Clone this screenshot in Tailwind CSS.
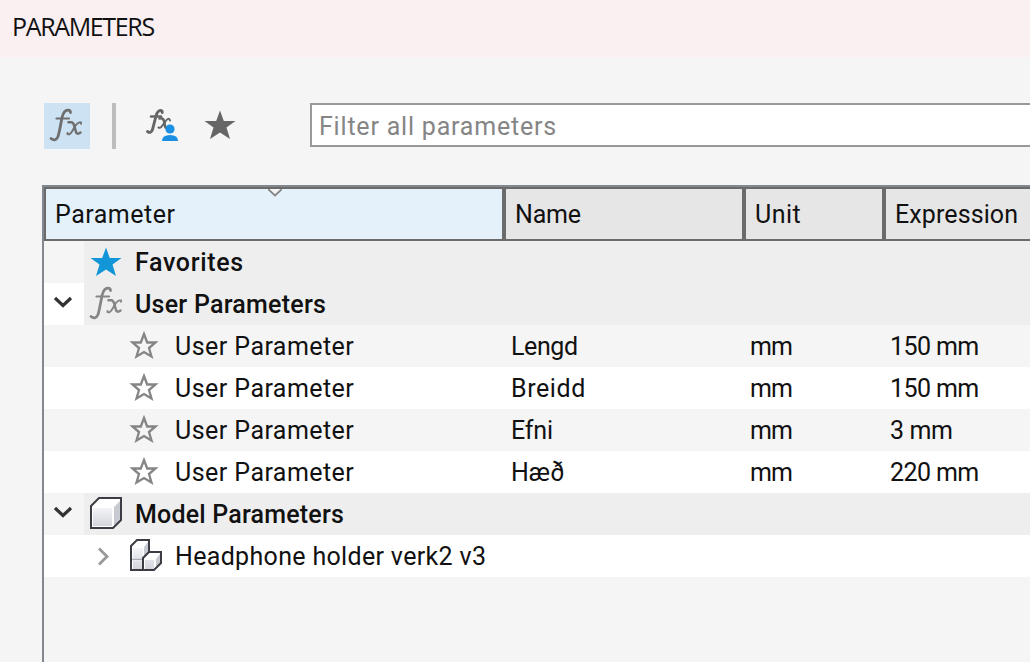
<!DOCTYPE html>
<html lang="en">
<head>
<meta charset="utf-8">
<title>Parameters</title>
<script src="https://cdn.jsdelivr.net/npm/@tailwindcss/browser@4"></script>
</head>
<body class="w-[1030px] h-[662px] overflow-hidden bg-[#f5f5f5] text-[#111] text-[25px] font-['Roboto',sans-serif] flex flex-col whitespace-nowrap">
<svg class="hidden">
  <symbol id="star" viewBox="0 0 32 32"><path d="M16 1.500 19.800 12H31.500L22.500 18.500 26 30 16 23.500 6 30 9.500 18.500.5 12H12.200Z" fill="currentColor"/></symbol>
  <symbol id="outline" viewBox="0 0 30 30"><path d="M15 3 18.200 11.500H26.500L20 17 22.500 25.500 15 21 7.500 25.500 10 17 3.500 11.500H11.800Z" fill="none" stroke="#858585" stroke-width="2.300"/></symbol>
  <symbol id="fx" viewBox="0 0 34 36"><g fill="none" stroke="currentColor" stroke-linecap="round"><path d="M2 30.500Q6.500 34 9 28.500Q10 26 13 9.500Q15 2 19 2.200Q21.500 2.400 21.500 4.500" stroke-width="2.800"/><path d="M7.500 10.500H20" stroke-width="2.200"/><path d="M19.500 14.200H22.500Q24 14.200 25 17L27 24Q28 27 31.500 24.500" stroke-width="2.500"/><path d="M32 15.800V14.500Q29 13.500 26 18.500L23 23.500Q20.500 27.500 18.500 26V25" stroke-width="1.900"/></g></symbol>
  <symbol id="down" viewBox="0 0 20 12"><path d="M2 2 10 9.500 18 2" fill="none" stroke="#333" stroke-width="3.200"/></symbol>
</svg>
<header class="h-[57px] shrink-0 bg-[#faf0f1] pl-[12px] pt-[10px] leading-[32px] text-[25px] tracking-[-1.350px] font-['Open_Sans',sans-serif]">PARAMETERS</header>
<div class="h-[128px] shrink-0 flex items-start pt-[46px] pl-[44px]">
  <div class="w-[46px] h-[46px] bg-[#cde2f2] text-[#6e6e6e] pl-[5px] pt-[5px]"><svg class="w-[34px] h-[36px]"><use href="#fx"/></svg></div>
  <div class="w-[4px] h-[46px] bg-[#bdbdbd] ml-[22px]"></div>
  <div class="w-[34px] h-[34px] ml-[29px] mt-[5px] text-[#666]"><svg width="34" height="34" viewBox="0 0 34 34"><g fill="none" stroke="currentColor" stroke-linecap="round"><path d="M2.500 23.500Q6 26 7.500 21.500L11 8Q12.500 2.500 15.500 2.500Q17.500 2.600 17.200 4.500" stroke-width="2.900"/><path d="M6 8.500H16" stroke-width="2.400"/><path d="M14.500 10.500Q18 9.500 19 13L20 18Q20.500 20.500 22 19.500" stroke-width="2.600"/><path d="M25 12.500Q23.500 8.500 20 14L17 18Q15.500 20.500 13.500 19.500" stroke-width="2"/></g><circle cx="25" cy="21" r="4.600" fill="#1a8fe3"/><path d="M17 33Q17 27 25 27Q33 27 33 33Z" fill="#1a8fe3"/></svg></div>
  <svg class="w-[32px] h-[32px] ml-[25px] mt-[6px] text-[#666]"><use href="#star"/></svg>
  <div class="flex-1 h-[44px] ml-[74px] border-2 border-r-0 border-[#999] bg-white text-[#858585] pl-[7px] leading-[44px]"><span class="tracking-[0.8px]">Filter all parameters</span></div>
</div>
<main class="flex-1 ml-[42px] border-l-2 border-t-2 border-[#828790] flex flex-col">
  <div class="h-[54px] shrink-0 border-y-2 border-l-2 border-[#6b6b6b] flex bg-[#e6e6e6] leading-[52px]">
    <div class="relative w-[460px] h-[50px] bg-[#e4f1fb] border-r-4 border-[#6b6b6b] pl-[9px] tracking-[0.5px]">Parameter<svg class="absolute left-[222px] top-0" width="14" height="8"><path d="M0 0 7 6.500 14 0" fill="#f5f5f5" stroke="#858585" stroke-width="1.800"/></svg></div>
    <div class="w-[240px] h-[50px] border-r-4 border-[#6b6b6b] pl-[9px] tracking-[-0.2px]">Name</div>
    <div class="w-[140px] h-[50px] border-r-4 border-[#6b6b6b] pl-[9px] tracking-[0.5px]">Unit</div>
    <div class="pl-[9px] tracking-[0.1px]">Expression</div>
  </div>
  <div class="h-[42px] flex bg-[#eee] leading-[44px] font-medium"><div class="w-[40px] bg-[#f5f5f5]"></div><svg class="w-[32px] h-[32px] ml-[6px] mt-[5px] mr-[13px] text-[#1296d8]"><use href="#star"/></svg><span class="tracking-[0.65px]">Favorites</span></div>
  <div class="h-[42px] flex bg-[#eee] leading-[44px] font-medium"><div class="w-[40px] bg-white pl-[9px] pt-[13px]"><svg width="20" height="12"><use href="#down"/></svg></div><svg class="w-[34px] h-[36px] ml-[5px] mt-[3px] mr-[12px] text-[#858585]"><use href="#fx"/></svg><span class="tracking-[0.25px]">User Parameters</span></div>
  <div class="h-[42px] flex bg-[#f5f5f5] leading-[44px]"><div class="w-[467px] flex pl-[85px]"><svg class="w-[30px] h-[30px] mt-[6px] mr-[16px]"><use href="#outline"/></svg><span class="tracking-[0.45px]">User Parameter</span></div><div class="w-[239px] tracking-[-0.4px]">Lengd</div><div class="w-[140px] tracking-[-1px]">mm</div><div class="tracking-[-0.6px]">150 mm</div></div>
  <div class="h-[42px] flex bg-white leading-[44px]"><div class="w-[467px] flex pl-[85px]"><svg class="w-[30px] h-[30px] mt-[6px] mr-[16px]"><use href="#outline"/></svg><span class="tracking-[0.45px]">User Parameter</span></div><div class="w-[239px] tracking-[0.6px]">Breidd</div><div class="w-[140px] tracking-[-1px]">mm</div><div class="tracking-[-0.6px]">150 mm</div></div>
  <div class="h-[42px] flex bg-[#f5f5f5] leading-[44px]"><div class="w-[467px] flex pl-[85px]"><svg class="w-[30px] h-[30px] mt-[6px] mr-[16px]"><use href="#outline"/></svg><span class="tracking-[0.45px]">User Parameter</span></div><div class="w-[239px] tracking-[-0.2px]">Efni</div><div class="w-[140px] tracking-[-1px]">mm</div><div class="tracking-[-0.4px]">3 mm</div></div>
  <div class="h-[42px] flex bg-white leading-[44px]"><div class="w-[467px] flex pl-[85px]"><svg class="w-[30px] h-[30px] mt-[6px] mr-[16px]"><use href="#outline"/></svg><span class="tracking-[0.45px]">User Parameter</span></div><div class="w-[239px]">Hæð</div><div class="w-[140px] tracking-[-1px]">mm</div><div class="tracking-[-0.6px]">220 mm</div></div>
  <div class="h-[42px] flex bg-[#eee] leading-[44px] font-medium"><div class="w-[40px] bg-[#f5f5f5] pl-[9px] pt-[13px]"><svg width="20" height="12"><use href="#down"/></svg></div>
    <svg class="ml-[6px] mt-[4px] mr-[13px]" width="32" height="32"><defs><linearGradient id="g" x2="0" y2="1"><stop stop-color="#f5f5f8"/><stop offset="1" stop-color="#d4d6dd"/></linearGradient></defs><path d="M1 9 9 1H31V23L23 31H1Z" fill="#fff"/><path d="M3 11H22V29H3Z" fill="url(#g)"/><path d="M24 10 30 4V22L24 29Z" fill="#c8cad2"/><path d="M1 9 9 1H31V23L23 31H1Z" fill="none" stroke="#3c3d44" stroke-width="2"/></svg>
    <span class="tracking-[0.2px]">Model Parameters</span></div>
  <div class="h-[42px] flex bg-white leading-[44px]">
    <svg class="ml-[53px] mt-[12px]" width="13" height="19"><path d="M2 1.500 10 9.500 2 17.500" fill="none" stroke="#999" stroke-width="2.800"/></svg>
    <svg class="ml-[20px] mt-[4px] mr-[13px]" width="32" height="32"><path d="M1 7 7 1H19V13H31V24L24 31H1Z" fill="#fff"/><path d="M3 9H13V20H3ZM3 22H12V30H3ZM15 21H24V30H15Z" fill="url(#g)"/><path d="M14 8 18 3V14L14 18ZM26 20 30 15V24L26 29Z" fill="#c8cad2"/><path d="M1 7 7 1H19V13H31V24L24 31H1Z" fill="none" stroke="#3c3d44" stroke-width="2"/><path d="M13 31V19L19 13" fill="none" stroke="#3c3d44" stroke-width="2"/><path d="M2 20.500H12" stroke="#aaacb4" stroke-width="1.500"/></svg>
    <span class="tracking-[0.330px]">Headphone holder verk2 v3</span></div>
</main>
</body>
</html>
